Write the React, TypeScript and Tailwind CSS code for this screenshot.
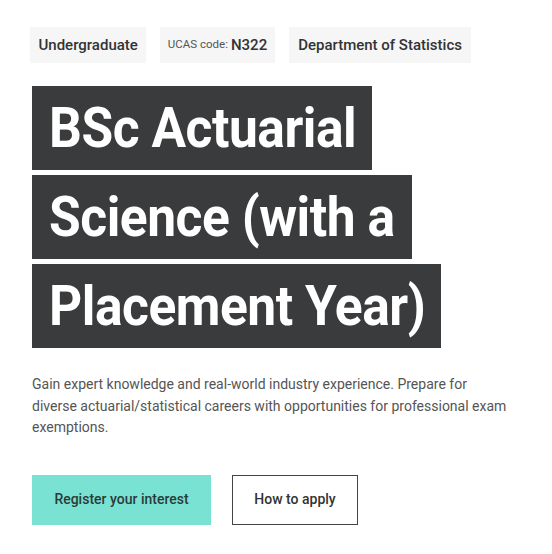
import React from "react";

export default function App() {
  const lines = [
    { t: "BSc Actuarial", w: "w-[340px]" },
    { t: "Science (with a", w: "w-[380px]" },
    { t: "Placement Year)", w: "w-[409px]" },
  ];
  return (
    <div className="w-[552px] h-[554px] bg-white overflow-hidden font-['Roboto',sans-serif]">
      <div className="pl-[32px] pt-[27px]">
        <div className="flex gap-[13.5px] -ml-[2px]">
          <div className="h-[36px] px-[8.5px] flex items-center bg-[#f6f6f7] text-[#333] text-[15px] font-medium">Undergraduate</div>
          <div className="h-[36px] px-[8px] flex items-center bg-[#f6f6f7] text-[#333]">
            <span className="text-[11.5px] text-[#555] mr-[3px]">UCAS code:</span>
            <span className="text-[15px] font-medium">N322</span>
          </div>
          <div className="h-[36px] px-[9.5px] flex items-center bg-[#f6f6f7] text-[#333] text-[15px] font-medium">Department of Statistics</div>
        </div>
        <div className="mt-[23px] flex flex-col items-start gap-[5px]">
          {lines.map((l) => (
            <div key={l.t} className={`${l.w} h-[84px] bg-[#3a3b3c] text-white pl-[17px] flex items-center overflow-hidden`}>
              <span className="inline-block whitespace-nowrap origin-left scale-x-[0.92] text-[56px] font-bold leading-none tracking-[-0.5px]">
                {l.t}
              </span>
            </div>
          ))}
        </div>
        <p className="mt-[26px] w-[490px] text-[14px] leading-[21.5px] text-[#555]">
          Gain expert knowledge and real-world industry experience. Prepare for
          <br />
          diverse actuarial/statistical careers with opportunities for professional exam exemptions.
        </p>
        <div className="mt-[36px] flex gap-[21px]">
          <div className="w-[179px] h-[50px] bg-[#79e2d2] flex items-center justify-center text-[14px] font-medium text-[#2a3b38]">Register your interest</div>
          <div className="w-[126px] h-[50px] border border-[#444] flex items-center justify-center text-[14px] font-medium text-[#333]">How to apply</div>
        </div>
      </div>
    </div>
  );
}
